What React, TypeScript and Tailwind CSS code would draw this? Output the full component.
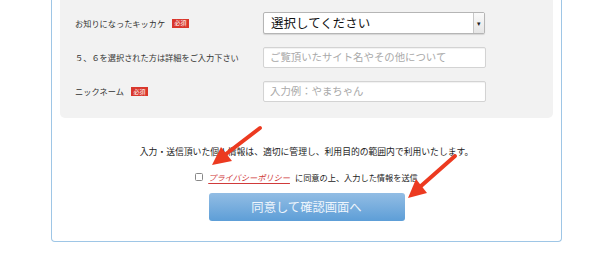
import React from "react";

const Badge = () => (
  <span className="ml-[7px] inline-flex h-[9px] w-[17px] items-center justify-center bg-[#d9372c] text-[6px] leading-none text-white">
    必須
  </span>
);

export default function App() {
  return (
    <div className="relative h-[255px] w-[611px] overflow-hidden bg-white font-['Noto_Sans_CJK_JP',sans-serif] text-[#333]">
      <div className="ml-[51px] w-[511px] rounded-b-[4px] border border-t-0 border-[#9ec6e6] px-[8px] pb-[20px]">
        <div className="flex flex-col gap-[13px] rounded-b-[5px] bg-[#f2f2f2] pb-[16px] pl-[15px] pt-[12px]">
          <div className="flex h-[22px] items-center">
            <div className="flex w-[188px] items-center text-[8.2px] leading-none">
              お知りになったキッカケ
              <Badge />
            </div>
            <div className="flex h-[22px] w-[222px] items-center rounded-[2px] border border-[#b5b5b5] bg-white shadow-[0_1px_1px_rgba(0,0,0,0.12)]">
              <span className="flex-1 pl-[7px] text-[12.5px] leading-none text-[#111]">選択してください</span>
              <span className="flex h-full w-[11px] items-center justify-center border-l border-[#c8c8c8] bg-gradient-to-b from-[#fafafa] to-[#e6e6e6] text-[7px] leading-none text-[#222]">
                ▾
              </span>
            </div>
          </div>
          <div className="flex h-[21px] items-center">
            <div className="w-[188px] text-[8.2px] leading-none">５、６を選択された方は詳細をご入力下さい</div>
            <div className="flex h-[21px] w-[223px] items-center rounded-[2px] border border-[#d3d3d3] bg-white pl-[6px] text-[10.4px] leading-none text-[#a9a9a9] shadow-[inset_0_1px_1px_rgba(0,0,0,0.06)]">
              ご覧頂いたサイト名やその他について
            </div>
          </div>
          <div className="flex h-[21px] items-center">
            <div className="flex w-[188px] items-center text-[8.2px] leading-none">
              ニックネーム
              <Badge />
            </div>
            <div className="flex h-[21px] w-[223px] items-center rounded-[2px] border border-[#d3d3d3] bg-white pl-[6px] text-[10.4px] leading-none text-[#a9a9a9] shadow-[inset_0_1px_1px_rgba(0,0,0,0.06)]">
              入力例：やまちゃん
            </div>
          </div>
        </div>

        <p className="mt-[28px] text-center text-[8.8px] leading-[12px] text-[#222]">
          入力・送信頂いた個人情報は、適切に管理し、利用目的の範囲内で利用いたします。
        </p>

        <div className="mt-[13px] flex h-[12px] items-center justify-center text-[8.2px] leading-none text-[#222]">
          <span className="mr-[5px] inline-block h-[8px] w-[8px] rounded-[1.5px] border border-[#888] bg-white" />
          <span className="italic text-[#d03a3a] underline decoration-[#d03a3a] underline-offset-[2px]">プライバシーポリシー</span>
          <span className="ml-[5px]">に同意の上、入力した情報を送信</span>
        </div>

        <div className="mt-[10px] flex justify-center">
          <div className="flex h-[28px] w-[196px] items-center justify-center rounded-[3px] bg-gradient-to-b from-[#92bde4] to-[#5d9ed7] text-[12.3px] leading-none text-[#eef5fc]">
            同意して確認画面へ
          </div>
        </div>
      </div>

      <svg className="pointer-events-none absolute left-0 top-0" width="611" height="255" viewBox="0 0 611 255">
        <line x1="260" y1="128" x2="226" y2="154" stroke="#ec3a20" strokeWidth="4" strokeLinecap="round" />
        <polygon points="212,165 232,161 221,147" fill="#ec3a20" />
        <line x1="455" y1="156" x2="421" y2="186" stroke="#ec3a20" strokeWidth="4" strokeLinecap="round" />
        <polygon points="408,198 427,193 416,179" fill="#ec3a20" />
      </svg>
    </div>
  );
}
